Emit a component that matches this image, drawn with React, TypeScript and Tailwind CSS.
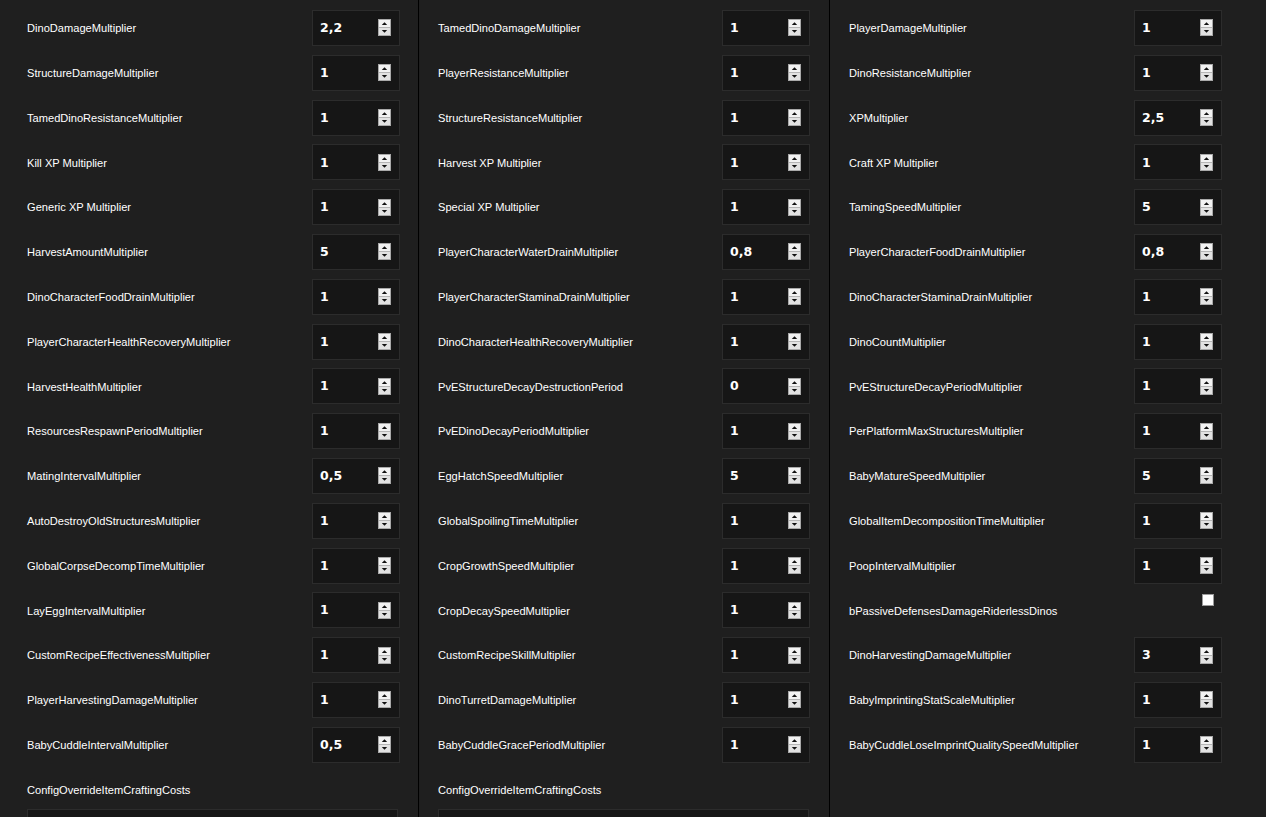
import React from "react";

type Field = { label: string; value?: string; checkbox?: boolean };

const COL1: Field[] = [
  { label: "DinoDamageMultiplier", value: "2,2" },
  { label: "StructureDamageMultiplier", value: "1" },
  { label: "TamedDinoResistanceMultiplier", value: "1" },
  { label: "Kill XP Multiplier", value: "1" },
  { label: "Generic XP Multiplier", value: "1" },
  { label: "HarvestAmountMultiplier", value: "5" },
  { label: "DinoCharacterFoodDrainMultiplier", value: "1" },
  { label: "PlayerCharacterHealthRecoveryMultiplier", value: "1" },
  { label: "HarvestHealthMultiplier", value: "1" },
  { label: "ResourcesRespawnPeriodMultiplier", value: "1" },
  { label: "MatingIntervalMultiplier", value: "0,5" },
  { label: "AutoDestroyOldStructuresMultiplier", value: "1" },
  { label: "GlobalCorpseDecompTimeMultiplier", value: "1" },
  { label: "LayEggIntervalMultiplier", value: "1" },
  { label: "CustomRecipeEffectivenessMultiplier", value: "1" },
  { label: "PlayerHarvestingDamageMultiplier", value: "1" },
  { label: "BabyCuddleIntervalMultiplier", value: "0,5" },
];

const COL2: Field[] = [
  { label: "TamedDinoDamageMultiplier", value: "1" },
  { label: "PlayerResistanceMultiplier", value: "1" },
  { label: "StructureResistanceMultiplier", value: "1" },
  { label: "Harvest XP Multiplier", value: "1" },
  { label: "Special XP Multiplier", value: "1" },
  { label: "PlayerCharacterWaterDrainMultiplier", value: "0,8" },
  { label: "PlayerCharacterStaminaDrainMultiplier", value: "1" },
  { label: "DinoCharacterHealthRecoveryMultiplier", value: "1" },
  { label: "PvEStructureDecayDestructionPeriod", value: "0" },
  { label: "PvEDinoDecayPeriodMultiplier", value: "1" },
  { label: "EggHatchSpeedMultiplier", value: "5" },
  { label: "GlobalSpoilingTimeMultiplier", value: "1" },
  { label: "CropGrowthSpeedMultiplier", value: "1" },
  { label: "CropDecaySpeedMultiplier", value: "1" },
  { label: "CustomRecipeSkillMultiplier", value: "1" },
  { label: "DinoTurretDamageMultiplier", value: "1" },
  { label: "BabyCuddleGracePeriodMultiplier", value: "1" },
];

const COL3: Field[] = [
  { label: "PlayerDamageMultiplier", value: "1" },
  { label: "DinoResistanceMultiplier", value: "1" },
  { label: "XPMultiplier", value: "2,5" },
  { label: "Craft XP Multiplier", value: "1" },
  { label: "TamingSpeedMultiplier", value: "5" },
  { label: "PlayerCharacterFoodDrainMultiplier", value: "0,8" },
  { label: "DinoCharacterStaminaDrainMultiplier", value: "1" },
  { label: "DinoCountMultiplier", value: "1" },
  { label: "PvEStructureDecayPeriodMultiplier", value: "1" },
  { label: "PerPlatformMaxStructuresMultiplier", value: "1" },
  { label: "BabyMatureSpeedMultiplier", value: "5" },
  { label: "GlobalItemDecompositionTimeMultiplier", value: "1" },
  { label: "PoopIntervalMultiplier", value: "1" },
  { label: "bPassiveDefensesDamageRiderlessDinos", checkbox: true },
  { label: "DinoHarvestingDamageMultiplier", value: "3" },
  { label: "BabyImprintingStatScaleMultiplier", value: "1" },
  { label: "BabyCuddleLoseImprintQualitySpeedMultiplier", value: "1" },
];

// Native-looking number spinner (light gray, two arrow halves).
function Spinner() {
  return (
    <svg width="13" height="17" viewBox="0 0 13 17" className="shrink-0">
      <rect x="0.5" y="0.5" width="12" height="16" fill="#e9e9e9" stroke="#a9a9a9" />
      <rect x="1" y="1" width="11" height="7" fill="#f2f2f2" />
      <rect x="1" y="8" width="11" height="1" fill="#b5b5b5" />
      <rect x="1" y="9" width="11" height="7" fill="#e2e2e2" />
      <path d="M6.5 3.2 L9.2 6 L3.8 6 Z" fill="#111" />
      <path d="M3.8 11 L9.2 11 L6.5 13.8 Z" fill="#111" />
    </svg>
  );
}

function NumberBox({ value }: { value: string }) {
  return (
    <div className="flex h-[36px] w-[88px] items-center justify-between border border-[#2c2c2c] bg-[#161616] pl-[7px] pr-[8px]">
      <span className="pt-[1px] font-['DejaVu_Sans',sans-serif] text-[12.5px] font-bold text-white">
        {value}
      </span>
      <Spinner />
    </div>
  );
}

function Row({ field }: { field: Field }) {
  return (
    <div className="flex h-[44.8px] items-center justify-between">
      <span className="pt-[1px] text-[11.1px] text-white">{field.label}</span>
      {field.checkbox ? (
        <div className="mr-[8px] mt-[-20px] h-[12px] w-[12px] border border-[#9a9a9a] bg-white" />
      ) : (
        <NumberBox value={field.value ?? ""} />
      )}
    </div>
  );
}

function CraftingCosts({ width }: { width: string }) {
  return (
    <div>
      <div className="pt-[17px] text-[11.1px] leading-[13px] text-white">
        ConfigOverrideItemCraftingCosts
      </div>
      <div className={`mt-[12px] h-[40px] border border-[#2c2c2c] bg-[#161616] ${width}`} />
    </div>
  );
}

export default function App() {
  return (
    <div className="flex h-[817px] w-full overflow-hidden bg-[#1f1f1f] font-['Liberation_Sans',Arial,sans-serif]">
      <div className="w-[419px] shrink-0 border-r border-black pl-[27px] pr-[18px] pt-[5.6px]">
        {COL1.map((f) => (
          <Row key={f.label} field={f} />
        ))}
        <CraftingCosts width="w-[371px]" />
      </div>
      <div className="w-[411px] shrink-0 border-r border-black pl-[19px] pr-[19px] pt-[5.6px]">
        {COL2.map((f) => (
          <Row key={f.label} field={f} />
        ))}
        <CraftingCosts width="w-[371px]" />
      </div>
      <div className="flex-1 pl-[19px] pr-[44px] pt-[5.6px]">
        {COL3.map((f) => (
          <Row key={f.label} field={f} />
        ))}
      </div>
    </div>
  );
}
